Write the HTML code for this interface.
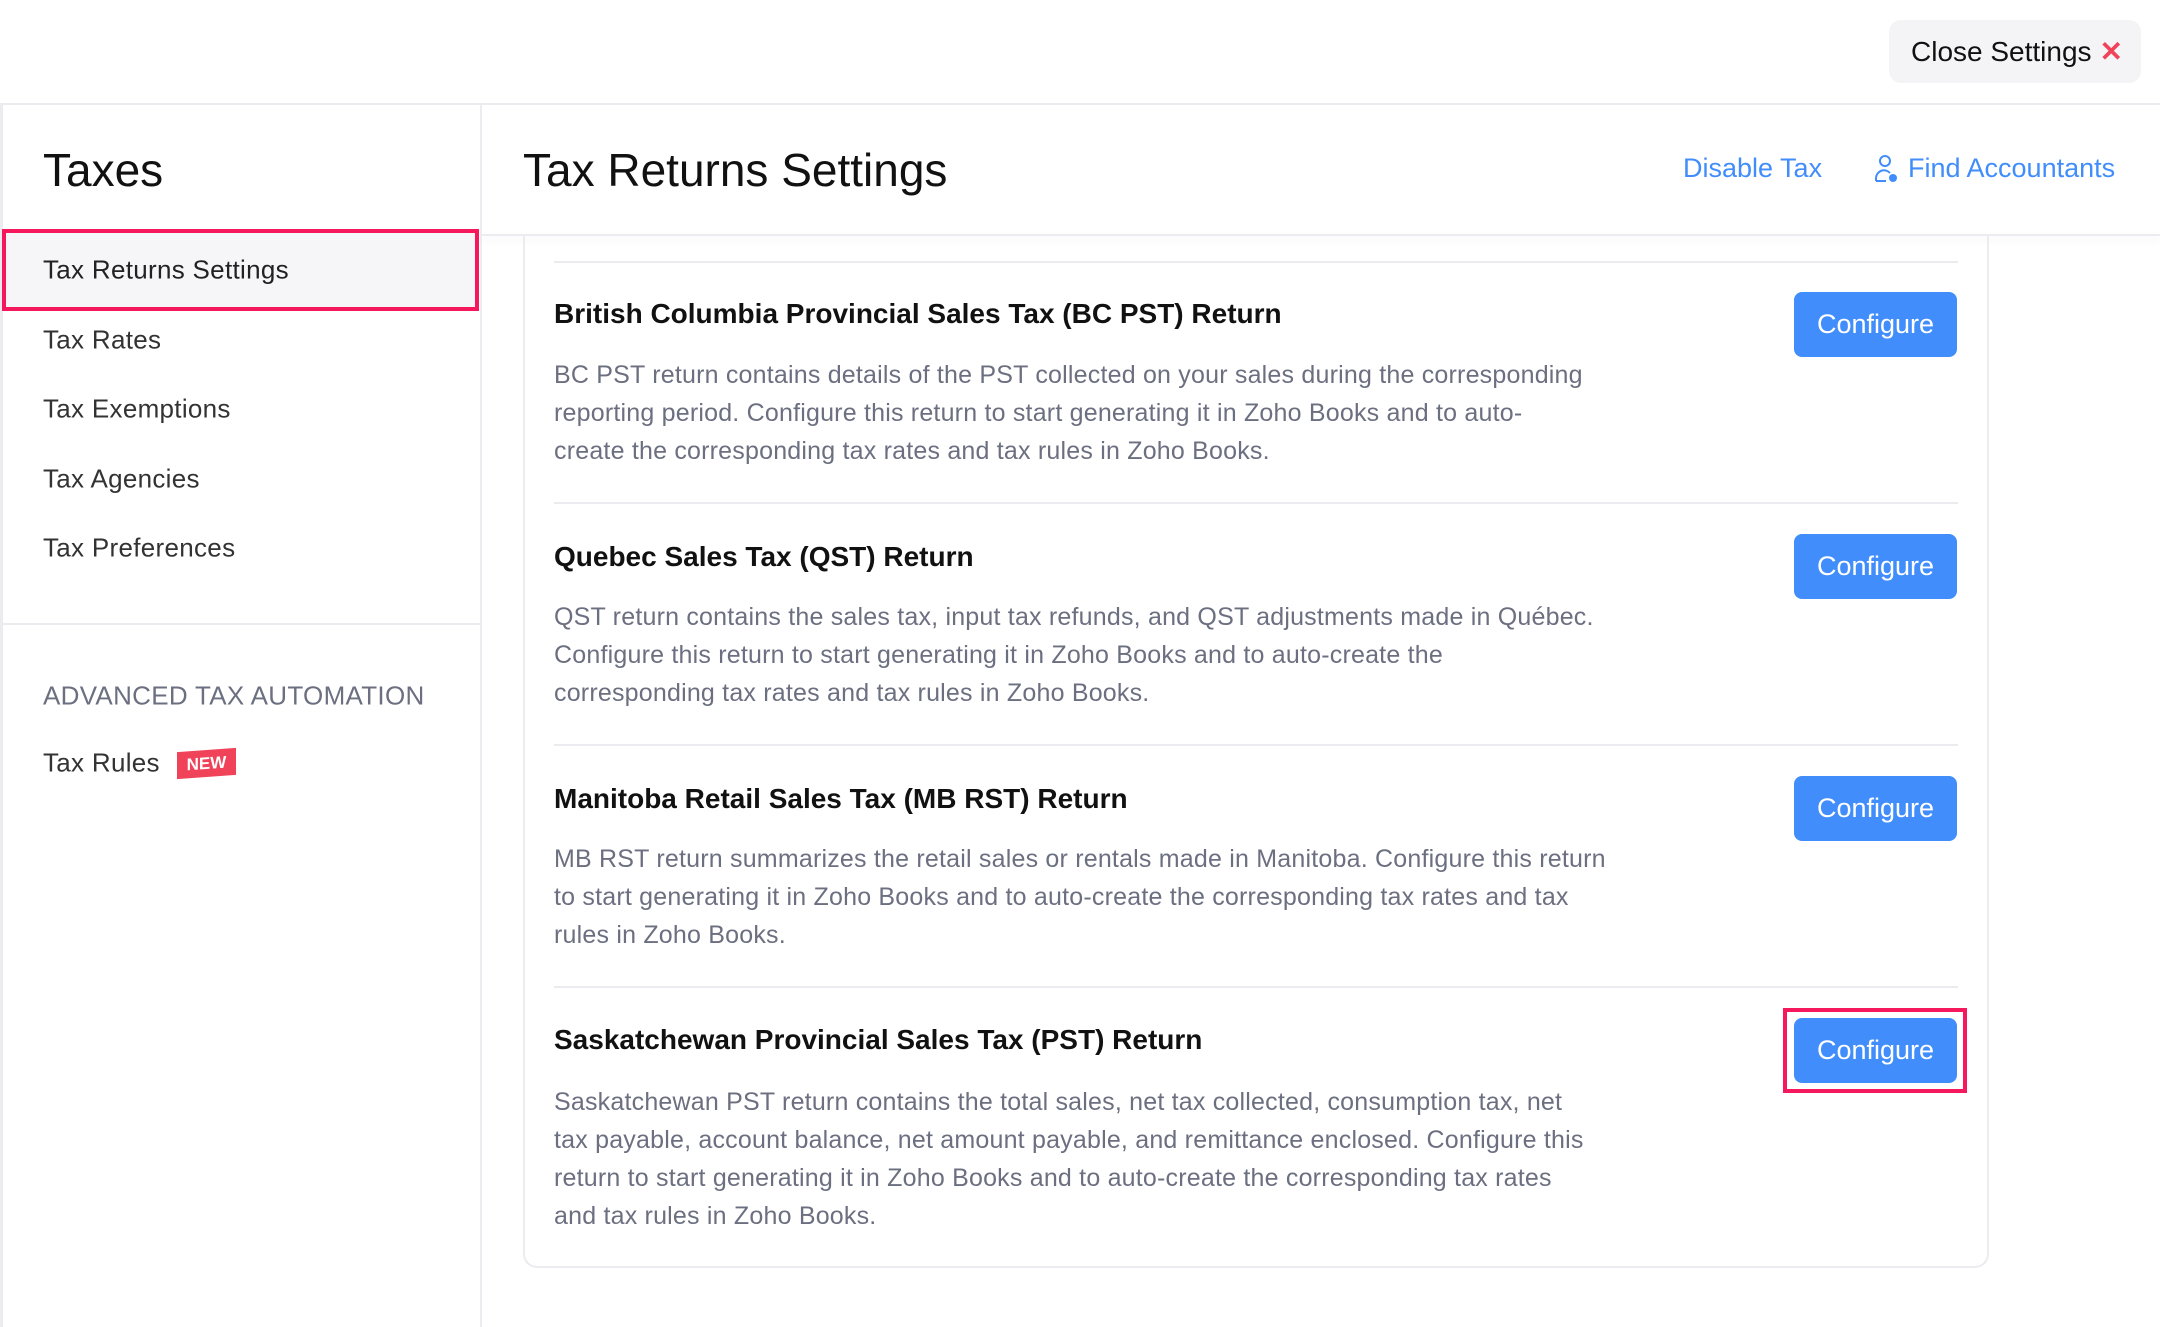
<!DOCTYPE html>
<html><head><meta charset="utf-8"><style>
*{box-sizing:border-box;margin:0;padding:0}
body{width:2160px;height:1327px;background:#fff;font-family:"Liberation Sans",sans-serif;color:#111;position:relative;overflow:hidden}
.abs{position:absolute;white-space:nowrap}
.close{left:1889px;top:20px;width:252px;height:63px;background:#f4f4f6;border-radius:12px;font-size:28px;line-height:63px;padding-left:22px;color:#111}
.close span{color:#f0435a;font-weight:bold;margin-left:8px}
.topline{left:0;top:103px;width:2160px;height:2px;background:#ececf0}
.side{left:0;top:105px;width:482px;height:1222px;border-left:3px solid #ececf0;border-right:2px solid #ececf0}
.hdrline{left:482px;top:234px;width:1678px;height:2px;background:#ececf0;box-shadow:0 4px 8px rgba(0,0,0,.08)}
.item{left:43px;font-size:26px;color:#333;transform:translateY(-50%);letter-spacing:.3px}
.sel{left:2px;top:229px;width:477px;height:82px;border:4px solid #f5185d;background:#f6f6f9}
.card{left:523px;top:236px;width:1466px;height:1032px;border:2px solid #ececf0;border-top:none;border-radius:0 0 14px 14px}
.div{left:554px;width:1404px;height:2px;background:#ececf0}
.t{left:554px;font-size:28px;font-weight:bold;color:#111;transform:translateY(-50%)}
.d{left:554px;font-size:25px;line-height:38px;color:#6b6f80;letter-spacing:.2px}
.btn{left:1794px;width:163px;height:65px;background:#408dfb;border-radius:8px;color:#fff;font-size:27px;line-height:65px;text-align:center}
</style></head><body>
<div class="abs close">Close Settings<span>✕</span></div>
<div class="abs topline"></div>
<div class="abs side"></div>
<div class="abs" style="left:43px;top:140px;font-size:46px;line-height:60px">Taxes</div>
<div class="abs" style="left:523px;top:140px;font-size:46px;line-height:60px">Tax Returns Settings</div>
<div class="abs" style="left:1683px;top:153px;font-size:27px;color:#408dfb">Disable Tax</div>
<svg class="abs" style="left:1873px;top:154px" width="28" height="30" viewBox="0 0 28 30"><circle cx="12" cy="7" r="5" fill="none" stroke="#408dfb" stroke-width="2"/><path d="M3 27 v-3 a8 8 0 0 1 14-5" fill="none" stroke="#408dfb" stroke-width="2"/><path d="M3 27 h10" stroke="#408dfb" stroke-width="2"/><circle cx="20" cy="24" r="4" fill="#408dfb"/></svg>
<div class="abs" style="left:1908px;top:153px;font-size:27px;color:#408dfb">Find Accountants</div>
<div class="abs hdrline"></div>
<div class="abs sel"></div>
<div class="abs item" style="top:270px;color:#222">Tax Returns Settings</div>
<div class="abs item" style="top:340px">Tax Rates</div>
<div class="abs item" style="top:409px">Tax Exemptions</div>
<div class="abs item" style="top:479px">Tax Agencies</div>
<div class="abs item" style="top:548px">Tax Preferences</div>
<div class="abs" style="left:3px;top:623px;width:477px;height:2px;background:#ececf0"></div>
<div class="abs item" style="top:696px;color:#6b6f80">ADVANCED TAX AUTOMATION</div>
<div class="abs item" style="top:763px">Tax Rules</div>
<div class="abs" style="left:177px;top:750px;width:59px;height:27px;background:#f0435a;color:#fff;font-size:17px;font-weight:bold;line-height:27px;text-align:center;transform:skewY(-4deg)">NEW</div>
<div class="abs card"></div>
<div class="abs div" style="top:261px"></div>
<div class="abs t" style="top:314px">British Columbia Provincial Sales Tax (BC PST) Return</div>
<div class="abs d" style="top:356px">BC PST return contains details of the PST collected on your sales during the corresponding<br>reporting period. Configure this return to start generating it in Zoho Books and to auto-<br>create the corresponding tax rates and tax rules in Zoho Books.</div>
<div class="abs btn" style="top:292px">Configure</div>
<div class="abs div" style="top:502px"></div>
<div class="abs t" style="top:557px">Quebec Sales Tax (QST) Return</div>
<div class="abs d" style="top:598px">QST return contains the sales tax, input tax refunds, and QST adjustments made in Québec.<br>Configure this return to start generating it in Zoho Books and to auto-create the<br>corresponding tax rates and tax rules in Zoho Books.</div>
<div class="abs btn" style="top:534px">Configure</div>
<div class="abs div" style="top:744px"></div>
<div class="abs t" style="top:799px">Manitoba Retail Sales Tax (MB RST) Return</div>
<div class="abs d" style="top:840px">MB RST return summarizes the retail sales or rentals made in Manitoba. Configure this return<br>to start generating it in Zoho Books and to auto-create the corresponding tax rates and tax<br>rules in Zoho Books.</div>
<div class="abs btn" style="top:776px">Configure</div>
<div class="abs div" style="top:986px"></div>
<div class="abs t" style="top:1040px">Saskatchewan Provincial Sales Tax (PST) Return</div>
<div class="abs d" style="top:1083px">Saskatchewan PST return contains the total sales, net tax collected, consumption tax, net<br>tax payable, account balance, net amount payable, and remittance enclosed. Configure this<br>return to start generating it in Zoho Books and to auto-create the corresponding tax rates<br>and tax rules in Zoho Books.</div>
<div class="abs" style="left:1783px;top:1008px;width:184px;height:85px;border:4px solid #f5185d"></div>
<div class="abs btn" style="top:1018px">Configure</div>
</body></html>
